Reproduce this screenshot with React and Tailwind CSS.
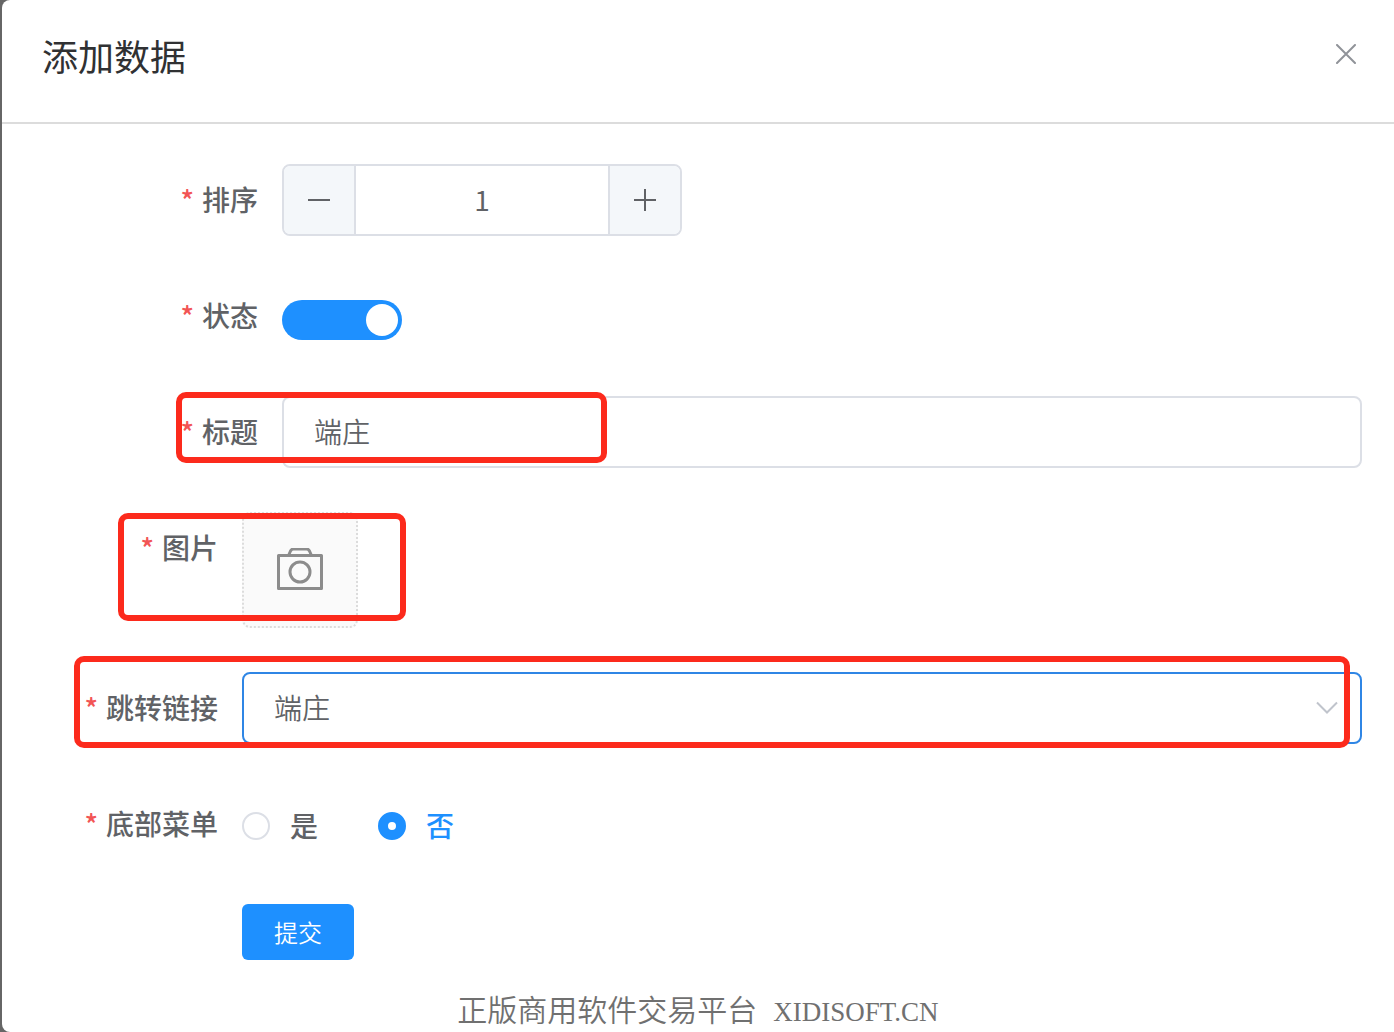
import { useState } from 'react';

const controlBorder = 'border-2 border-[#dcdfe6] rounded-lg';

function Label({ htmlFor, id, wide, children }) {
  return (
    <label
      id={id}
      htmlFor={htmlFor}
      className={`shrink-0 h-[70px] pr-6 text-right font-medium leading-[70px] text-[#606266] ${wide ? 'w-60' : 'w-50'}`}
    >
      <span className="mr-2 text-[#f25555]">*</span>
      {children}
    </label>
  );
}

// red frame drawn over a row
function Highlight({ className }) {
  return <div className={`absolute pointer-events-none border-6 border-[#fc2a1c] rounded-[10px] ${className}`} />;
}

function CloseIcon() {
  return (
    <svg width="20" height="20" viewBox="0 0 20 20" fill="none" stroke="#909399" strokeWidth="2" strokeLinecap="round">
      <path d="M1 1 19 19M19 1 1 19" />
    </svg>
  );
}

function CameraIcon() {
  return (
    <svg width="46" height="44" viewBox="0 0 46 44" fill="none" stroke="#8c8c8c" strokeWidth="3" strokeLinejoin="round">
      <path d="M1.5 7.5h43v33h-43z" />
      <path d="M11.5 7.5l2-4.5q1-2 3-2h13q2 0 3 2l2 4.5" />
      <circle cx="23" cy="24" r="10" />
    </svg>
  );
}

export default function App() {
  const [sort, setSort] = useState(1);
  const [enabled, setEnabled] = useState(true);
  const [title, setTitle] = useState('端庄');
  const [link, setLink] = useState('端庄');
  const [bottomMenu, setBottomMenu] = useState('否');

  return (
    <div className="min-h-screen flex bg-[#666] pl-0.5 font-['Noto_Sans_CJK_SC',sans-serif] text-[28px]">
      <div className="flex-1 min-w-0 flex flex-col bg-white rounded-l-lg">
        <header className="flex items-start justify-between h-31 pl-10 pr-9 pt-8 border-b-2 border-[#dcdcdc]">
          <h1 className="text-4xl leading-[46px] text-[#303133]">添加数据</h1>
          <button type="button" aria-label="关闭" className="p-0.5 mt-2.5">
            <CloseIcon />
          </button>
        </header>

        <form className="flex flex-col gap-11 pl-10 pr-8 pt-10" onSubmit={e => e.preventDefault()}>
          <div className="flex">
            <Label htmlFor="sort" wide>排序</Label>
            <div className={`flex w-100 h-18 overflow-hidden ${controlBorder}`}>
              <button type="button" aria-label="减少" onClick={() => setSort(sort - 1)}
                className="flex items-center justify-center w-18 bg-[#f4f7fa] border-r-2 border-[#dcdfe6]">
                <svg width="24" height="24" stroke="#606266" strokeWidth="2"><path d="M1 12h22" /></svg>
              </button>
              <input id="sort" value={sort} onChange={e => setSort(Number(e.target.value) || 0)}
                className="flex-1 min-w-0 pb-0.5 text-center text-[#606266] outline-none" />
              <button type="button" aria-label="增加" onClick={() => setSort(sort + 1)}
                className="flex items-center justify-center w-18 bg-[#f4f7fa] border-l-2 border-[#dcdfe6]">
                <svg width="24" height="24" stroke="#606266" strokeWidth="2"><path d="M1 12h22M12 1v22" /></svg>
              </button>
            </div>
          </div>

          <div className="flex h-18">
            <Label htmlFor="enabled" wide>状态</Label>
            <input id="enabled" type="checkbox" role="switch" checked={enabled} onChange={e => setEnabled(e.target.checked)}
              className="appearance-none flex items-center w-30 h-10 mt-5 px-1 rounded-full bg-[#dcdfe6] checked:bg-[#1e90ff] checked:justify-end before:size-8 before:rounded-full before:bg-white" />
          </div>

          <div className="relative flex">
            <Label htmlFor="title" wide>标题</Label>
            <input id="title" value={title} onChange={e => setTitle(e.target.value)}
              className={`flex-1 min-w-0 h-18 px-[30px] pb-0.5 font-[350] text-[#606266] outline-none ${controlBorder}`} />
            <Highlight className="left-[134px] -top-1 w-[431px] h-[71px]" />
          </div>

          <div className="relative flex">
            <Label htmlFor="picture">图片</Label>
            <button id="picture" type="button"
              className="flex items-center justify-center size-29 bg-[#fafafa] border-2 border-dotted border-[#dcdcdc] rounded-lg">
              <CameraIcon />
            </button>
            <Highlight className="left-19 top-px w-72 h-27" />
          </div>

          <div className="relative flex">
            <Label htmlFor="link">跳转链接</Label>
            <div className="relative flex-1">
              <select id="link" value={link} onChange={e => setLink(e.target.value)}
                className="appearance-none w-full h-18 px-[30px] pb-0.5 bg-white border-2 border-[#2f86e5] rounded-lg font-[350] text-[#606266] outline-none">
                <option>端庄</option>
              </select>
              <svg className="absolute right-6 top-[29px] pointer-events-none" width="22" height="14" fill="none" stroke="#c0c4cc" strokeWidth="2">
                <path d="M1 1.5 11 11.5 21 1.5" />
              </svg>
            </div>
            <Highlight className="left-8 right-3 -top-4 -bottom-1" />
          </div>

          <div className="flex h-18" role="radiogroup" aria-labelledby="menu-label">
            <Label id="menu-label">底部菜单</Label>
            <div className="flex items-center h-[76px] gap-15">
              {['是', '否'].map(option => (
                <label key={option} className="flex items-center gap-5 font-medium leading-10 text-[#606266] has-checked:text-[#1e90ff]">
                  <input type="radio" name="bottomMenu" value={option} checked={bottomMenu === option}
                    onChange={() => setBottomMenu(option)}
                    className="appearance-none size-7 rounded-full border-2 border-[#dcdfe6] bg-white checked:border-10 checked:border-[#1e90ff]" />
                  <span className="pb-0.5">{option}</span>
                </label>
              ))}
            </div>
          </div>

          <button type="submit" className="w-28 h-14 ml-50 rounded-md bg-[#1e90ff] text-2xl font-[350] text-white">提交</button>
        </form>

        <footer className="mt-auto pb-0.5 text-center leading-9 text-[#707070]">
          <span className="mr-4 text-[30px] font-[350]">正版商用软件交易平台</span>
          <span className="font-['Liberation_Serif',serif] text-[27px]">XIDISOFT.CN</span>
        </footer>
      </div>
    </div>
  );
}
